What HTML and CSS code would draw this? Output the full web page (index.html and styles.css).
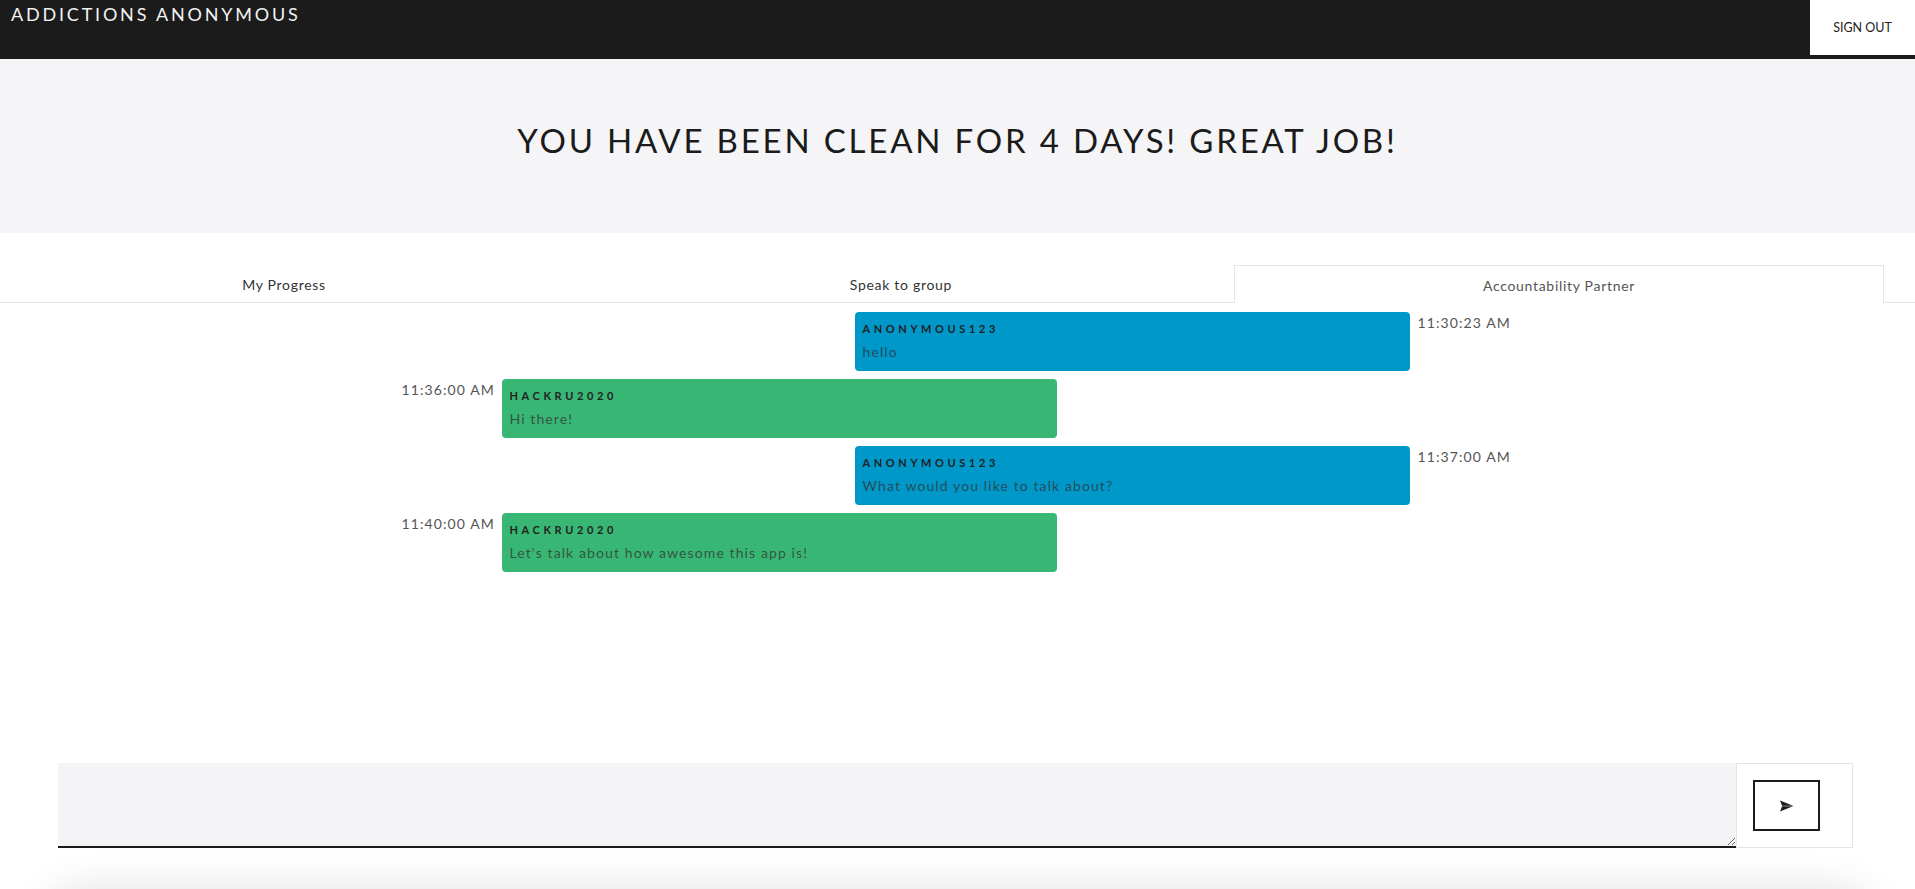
FILE: index.html
```html
<!DOCTYPE html>
<html lang="en">
<head>
<meta charset="utf-8">
<title>Addictions Anonymous</title>
<link rel="stylesheet" href="styles.css">
</head>
<body>
<header class="topbar">
  <div class="brand">ADDICTIONS ANONYMOUS</div>
  <button class="signout">SIGN OUT</button>
</header>
<section class="banner">
  <h1>YOU HAVE BEEN CLEAN FOR 4 DAYS! GREAT JOB!</h1>
</section>
<nav class="tabs">
  <div class="tab">My Progress</div>
  <div class="tab">Speak to group</div>
  <div class="tab active">Accountability Partner</div>
  <div class="tab-fill"></div>
</nav>
<main class="chat">
  <div class="row mine">
    <div class="bubble blue"><div class="sender">ANONYMOUS123</div><div class="text">hello</div></div>
    <div class="time">11:30:23 AM</div>
  </div>
  <div class="row theirs">
    <div class="time">11:36:00 AM</div>
    <div class="bubble green"><div class="sender">HACKRU2020</div><div class="text">Hi there!</div></div>
  </div>
  <div class="row mine">
    <div class="bubble blue"><div class="sender">ANONYMOUS123</div><div class="text">What would you like to talk about?</div></div>
    <div class="time">11:37:00 AM</div>
  </div>
  <div class="row theirs">
    <div class="time">11:40:00 AM</div>
    <div class="bubble green"><div class="sender">HACKRU2020</div><div class="text">Let's talk about how awesome this app is!</div></div>
  </div>
</main>
<form class="composer">
  <textarea class="input"></textarea>
  <div class="send-wrap">
    <button type="button" class="send" aria-label="Send">
      <svg width="14" height="12" viewBox="0 0 14 12"><path d="M0 0.5 L13.5 6 L0 11.5 L2.2 6 Z" fill="#1b1b1b"/><path d="M2.2 6 H13" stroke="#fff" stroke-width="0.8" opacity="0.6"/></svg>
    </button>
  </div>
</form>
<div class="below"></div>
</body>
</html>
```
FILE: styles.css
```css
* { box-sizing: border-box; }
html, body { margin: 0; padding: 0; }
body {
  font-family: "Lato", "Open Sans", sans-serif;
  color: #1b1b1b;
  background: #fff;
  overflow: hidden;
  height: 889px;
}
.topbar {
  height: 59px;
  background: #1b1b1b;
  display: flex;
  justify-content: space-between;
  align-items: flex-start;
}
.brand {
  color: #f2f2f2;
  font-size: 18px;
  letter-spacing: 2.8px;
  padding: 4px 0 0 11px;
  line-height: 20px;
}
.signout {
  width: 105px;
  height: 55px;
  border: none;
  background: #fff;
  color: #222;
  font-family: inherit;
  font-size: 12.5px;
  padding: 0;
}
.banner {
  height: 174px;
  background: #f5f5f7;
  display: flex;
  align-items: center;
  justify-content: center;
}
.banner h1 {
  margin: 0 0 12px;
  font-weight: 400;
  font-size: 33px;
  letter-spacing: 2.8px;
  color: #1b1b1b;
}
.tabs {
  margin-top: 32px;
  display: grid;
  grid-template-columns: 568px 666px 650px 1fr;
  height: 38px;
}
.tab {
  border-bottom: 1px solid #e6e6e6;
  display: flex;
  align-items: center;
  justify-content: center;
  font-size: 14px;
  letter-spacing: 0.7px;
  color: #333;
  padding-top: 2px;
}
.tab.active {
  border: 1px solid #e6e6e6;
  border-bottom: none;
  color: #555;
}
.tab-fill { border-bottom: 1px solid #e6e6e6; }
.chat {
  width: 1112px;
  margin: 0 auto;
  padding-right: 4px;
  height: 460px;
  padding-top: 9px;
  display: flex;
  flex-direction: column;
  gap: 8px;
}
.row {
  display: flex;
  gap: 8px;
  align-items: flex-start;
}
.row.mine { justify-content: flex-end; }
.time {
  width: 92px;
  font-size: 14px;
  letter-spacing: 1.1px;
  color: #555;
  padding-top: 2px;
  white-space: nowrap;
}
.row.theirs .time { text-align: right; }
.bubble {
  width: 555px;
  height: 59px;
  border-radius: 4px;
  padding: 8px 8px;
}
.blue { background: #0097c9; }
.green { background: #38b673; }
.sender {
  font-size: 11px;
  font-weight: 700;
  letter-spacing: 3.6px;
  line-height: 18px;
  color: #222;
}
.text {
  margin-top: 3px;
  font-size: 14px;
  line-height: 22px;
  letter-spacing: 1.1px;
  color: rgba(50, 50, 50, 0.75);
}
.composer {
  width: 1795px;
  margin: 0 0 0 58px;
  display: flex;
  height: 85px;
}
.input {
  flex: 1;
  height: 85px;
  background: #f4f4f6;
  border: none;
  border-bottom: 2px solid #1b1b1b;
  margin: 0;
  padding: 8px;
  font-family: inherit;
  font-size: 14px;
}
.send-wrap {
  width: 117px;
  height: 85px;
  border: 1px solid #e4e4e4;
  display: flex;
  align-items: flex-start;
  padding: 16px 0 0 16px;
}
.send {
  width: 67px;
  height: 51px;
  border: 2.5px solid #1b1b1b;
  background: #fff;
  display: flex;
  align-items: center;
  justify-content: center;
  padding: 0;
}
.below {
  margin: 41px auto 0;
  width: 1830px;
  height: 80px;
  border-radius: 40px;
  background: #fff;
  box-shadow: 0 0 40px rgba(0, 0, 0, 0.12);
}
```
